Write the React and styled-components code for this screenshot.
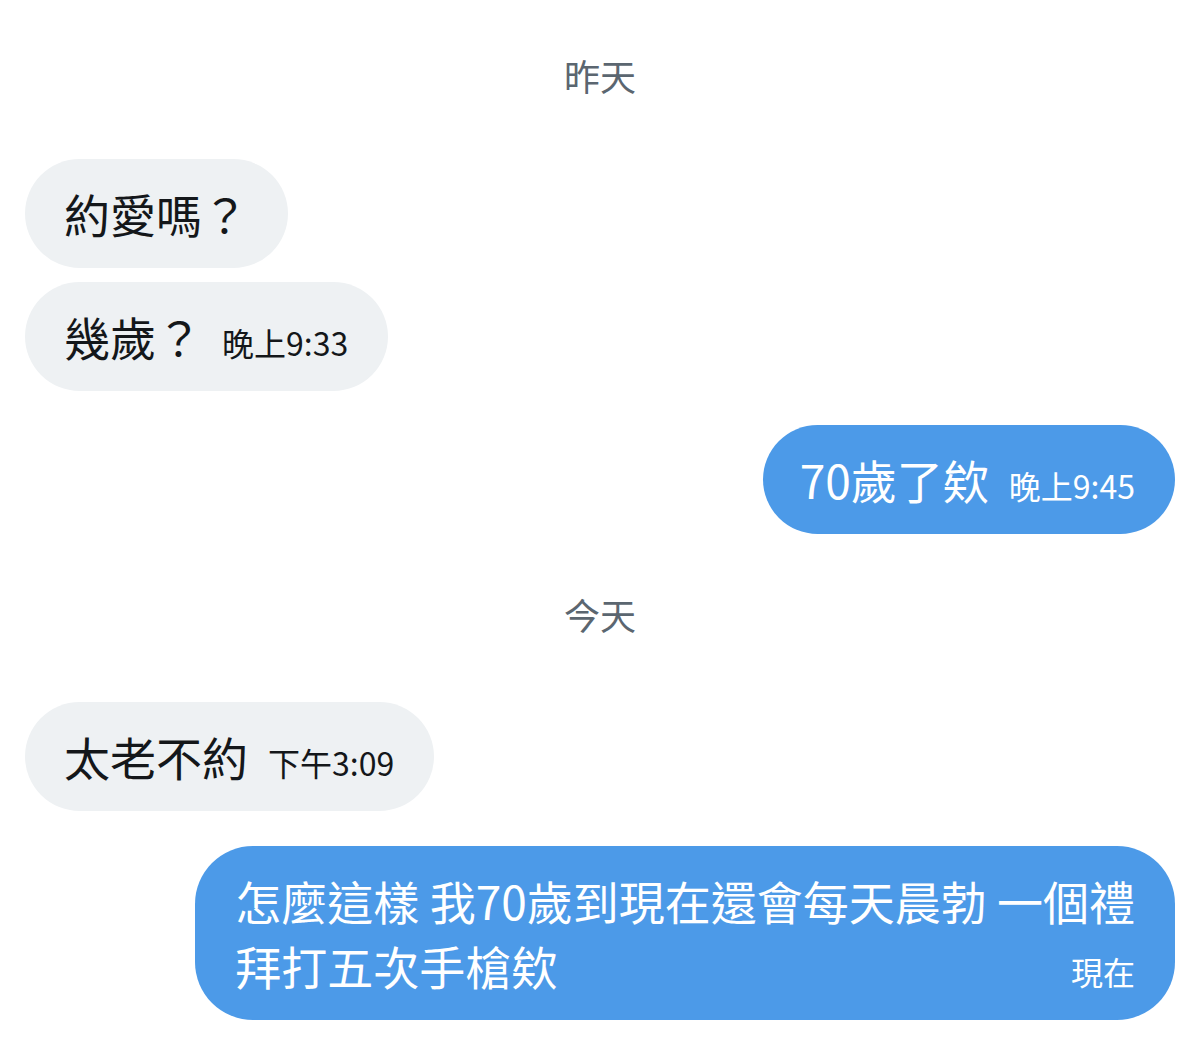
import React from "react";
import styled, { createGlobalStyle } from "styled-components";

const Global = createGlobalStyle`
  html, body { margin: 0; padding: 0; background: #ffffff; }
  body { font-family: "Noto Sans CJK TC", "Noto Sans", sans-serif; }
`;

const Page = styled.div`
  width: 1200px;
  min-height: 1038px;
  box-sizing: border-box;
  padding: 50px 25px 0;
  display: flex;
  flex-direction: column;
  background: #fff;
`;

const DateLabel = styled.div`
  text-align: center;
  font-size: 36px;
  line-height: 50px;
  height: 50px;
  color: #5b6670;
  margin-top: ${(p) => p.$top || 0}px;
  margin-bottom: ${(p) => p.$bottom || 59}px;
`;

const Row = styled.div`
  display: flex;
  justify-content: ${(p) => (p.$mine ? "flex-end" : "flex-start")};
  margin-top: ${(p) => p.$top || 0}px;
`;

const Bubble = styled.div`
  box-sizing: border-box;
  display: flex;
  align-items: baseline;
  gap: 20px;
  padding: 22px 40px 22px ${(p) => (p.$mine ? 37 : 39)}px;
  border-radius: 56px;
  background: ${(p) => (p.$mine ? "#4c9ae8" : "#eef1f3")};
  color: ${(p) => (p.$mine ? "#ffffff" : "#14171a")};
  font-size: 46px;
  line-height: 65px;
  white-space: nowrap;
`;

const MultiBubble = styled(Bubble)`
  display: block;
  padding: 22px 40px 22px 40px;
  border-radius: 58px;
`;

const Line = styled.div`
  display: flex;
  align-items: baseline;
  justify-content: space-between;
`;

const Time = styled.span`
  font-size: 32px;
  line-height: 40px;
`;

function Msg({ mine, top, text, time }) {
  return (
    <Row $mine={mine} $top={top}>
      <Bubble $mine={mine}>
        <span>{text}</span>
        {time && <Time>{time}</Time>}
      </Bubble>
    </Row>
  );
}

export default function App() {
  return (
    <>
      <Global />
      <Page>
        <DateLabel>昨天</DateLabel>
        <Msg text="約愛嗎？" />
        <Msg top={14} text="幾歲？" time="晚上9:33" />
        <Msg mine top={34} text="70歲了欸" time="晚上9:45" />
        <DateLabel $top={55} $bottom={63}>今天</DateLabel>
        <Msg text="太老不約" time="下午3:09" />
        <Row $mine $top={35}>
          <MultiBubble $mine>
            <Line>
              <span>怎麼這樣 我70歲到現在還會每天晨勃 一個禮</span>
            </Line>
            <Line>
              <span>拜打五次手槍欸</span>
              <Time>現在</Time>
            </Line>
          </MultiBubble>
        </Row>
      </Page>
    </>
  );
}
